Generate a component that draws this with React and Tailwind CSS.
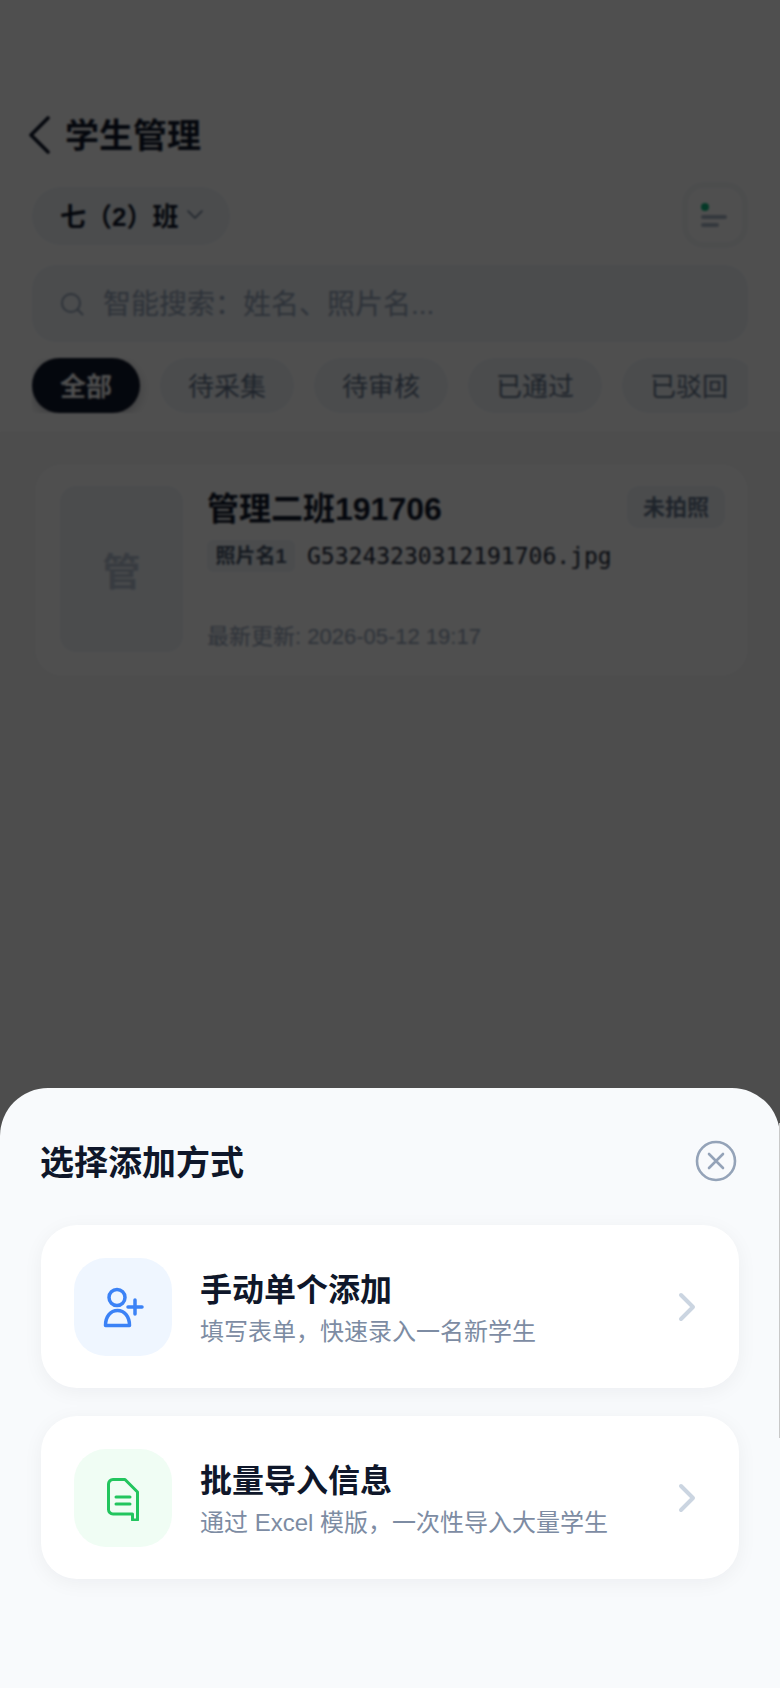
import React from "react";

const sans = "font-['Liberation_Sans','Noto_Sans_CJK_SC',sans-serif]";

function Tab({ label, active }) {
  return (
    <div
      className={
        active
          ? "shrink-0 h-[55px] px-7 pt-[3px] rounded-full flex items-center bg-[#0f172a] text-white text-[26px] font-bold shadow-[0_4px_12px_rgba(15,23,42,0.25)]"
          : "shrink-0 h-[55px] px-7 pt-[3px] rounded-full flex items-center bg-[#f1f5f9] text-[#64748b] text-[26px]"
      }
    >
      {label}
    </div>
  );
}

function Option({ tint, icon, title, sub }) {
  return (
    <div className="h-[163px] rounded-[36px] bg-white flex items-center pl-[33px] pr-[42px] shadow-[0_4px_20px_rgba(15,23,42,0.05)]">
      <div className={`w-[98px] h-[98px] rounded-[32px] flex items-center justify-center shrink-0 ${tint}`}>{icon}</div>
      <div className="ml-7 flex-1 min-w-0 pt-[5px]">
        <div className="text-[32px] leading-[40px] font-bold text-[#0f172a]">{title}</div>
        <div className="mt-[5px] text-[24px] leading-[34px] text-[#7d8ca3]">{sub}</div>
      </div>
      <svg width="20" height="32" viewBox="0 0 20 32" fill="none" stroke="#cbd5e1" strokeWidth="4" strokeLinecap="round" strokeLinejoin="round">
        <path d="M4 4l12 12L4 28" />
      </svg>
    </div>
  );
}

export default function App() {
  return (
    <div className={`relative w-[780px] h-[1688px] overflow-hidden bg-[#f7f7f7] ${sans}`}>
      <div className="bg-white h-[433px] pt-[117px] px-8 border-b border-[#f3f4f6]">
        <div className="flex items-center h-[38px] -ml-[5px]">
          <svg className="-mt-[2px]" width="24" height="38" viewBox="0 0 24 38" fill="none" stroke="#0f172a" strokeWidth="3.6" strokeLinecap="round" strokeLinejoin="round">
            <path d="M21 2L4 19l17 17" />
          </svg>
          <div className="ml-[14px] text-[34px] font-bold leading-[38px] text-[#0f172a]">学生管理</div>
        </div>
        <div className="flex items-center justify-between mt-[31px] h-[60px]">
          <div className="h-[58px] w-[198px] rounded-full bg-[#f1f5f9] flex items-center pl-7">
            <span className="text-[26px] font-bold text-[#0f172a] whitespace-nowrap pt-[2px]">七（2）班</span>
            <svg className="ml-[8px] -mt-[3px]" width="18" height="12" viewBox="0 0 18 12" fill="none" stroke="#64748b" strokeWidth="1.6" strokeLinecap="round" strokeLinejoin="round">
              <path d="M2 2l7 7 7-7" />
            </svg>
          </div>
          <div className="w-[66px] h-[66px] -mt-[2px] rounded-[22px] bg-white border-[6px] border-[#f5f7f9] flex flex-col justify-center pl-[13px] gap-[4px]">
            <div className="w-2 h-2 rounded-full bg-[#10b981]" />
            <div className="w-[26px] h-1 rounded-full bg-[#a8b4c6]" />
            <div className="w-[18px] h-1 rounded-full bg-[#a8b4c6]" />
          </div>
        </div>
        <div className="mt-[19px] h-[77px] rounded-[24px] bg-[#f1f5f9] flex items-center pl-[28px]">
          <svg width="24" height="24" viewBox="0 0 24 24" fill="none" stroke="#94a3b8" strokeWidth="2" strokeLinecap="round">
            <circle cx="11" cy="11" r="9" />
            <path d="M18 18l4.5 4.5" />
          </svg>
          <span className="ml-[19px] pt-[2px] text-[28px] text-[#94a3b8]">智能搜索：姓名、照片名...</span>
        </div>
        <div className="mt-[16px] flex gap-5 overflow-hidden">
          <Tab label="全部" active />
          <Tab label="待采集" />
          <Tab label="待审核" />
          <Tab label="已通过" />
          <Tab label="已驳回" />
        </div>
      </div>

      <div className="mx-[34px] mt-[30px] w-[715px] h-[214px] rounded-[28px] bg-white border border-[#f3f4f6] flex pl-[25px] pr-[23px] pt-[22px]">
        <div className="w-[123px] h-[166px] pt-[6px] rounded-[16px] bg-[#f1f5f9] flex items-center justify-center text-[38px] font-bold text-[#b4bfcf] shrink-0">管</div>
        <div className="ml-[24px] flex-1 min-w-0 flex flex-col">
          <div className="flex justify-between items-start">
            <div className="text-[32px] leading-[46px] font-bold text-[#0f172a] whitespace-nowrap">管理二班191706</div>
            <div className="w-[98px] h-[42px] rounded-[12px] bg-[#f1f5f9] flex items-center justify-center text-[22px] font-bold text-[#64748b]">未拍照</div>
          </div>
          <div className="flex items-center mt-[7px]">
            <div className="w-[88px] h-[32px] rounded-[6px] bg-[#f1f5f9] flex items-center justify-center text-[20px] text-[#475569] font-bold whitespace-nowrap">照片名1</div>
            <div className="ml-3 text-[23px] font-['DejaVu_Sans_Mono',monospace] text-[#1e293b]">G53243230312191706.jpg</div>
          </div>
          <div className="mt-[46px] text-[22px] text-[#94a3b8]">最新更新: 2026-05-12 19:17</div>
        </div>
      </div>

      <div className="absolute inset-0 bg-black/[0.69] backdrop-blur-[0.8px]" />

      <div className="absolute left-0 right-0 bottom-0 h-[600px] rounded-t-[48px] bg-[#f8fafc] pt-[49px] px-[41px]">
        <div className="flex items-center justify-between h-[50px]">
          <div className="text-[34px] font-bold text-[#0f172a] -ml-px pt-[3px]">选择添加方式</div>
          <svg className="mr-[2px] -mt-[2px]" width="42" height="42" viewBox="0 0 42 42" fill="none" stroke="#94a3b8" strokeWidth="2.6" strokeLinecap="round">
            <circle cx="21" cy="21" r="19" />
            <path d="M14 14l14 14M28 14L14 28" />
          </svg>
        </div>
        <div className="mt-[38px] flex flex-col gap-[28px]">
          <Option
            tint="bg-[#eff6ff]"
            title="手动单个添加"
            sub="填写表单，快速录入一名新学生"
            icon={
              <svg width="42" height="42" viewBox="0 0 42 42" fill="none" stroke="#3b82f6" strokeWidth="3.5" strokeLinecap="round" strokeLinejoin="round">
                <circle cx="15" cy="11.5" r="8" />
                <path d="M3.5 39.5c0-9 5-15 12-15s12 6 12 15z" />
                <path d="M26 21h14M33 14v14" />
              </svg>
            }
          />
          <Option
            tint="bg-[#f0fdf4]"
            title="批量导入信息"
            sub="通过 Excel 模版，一次性导入大量学生"
            icon={
              <svg width="32" height="46" viewBox="0 0 32 46" fill="none" stroke="#22c55e" strokeWidth="3" strokeLinecap="round" strokeLinejoin="round">
                <path d="M6 4.5h12L30.5 17v28h-5v-6H6a4.5 4.5 0 0 1-4.5-4.5V9A4.5 4.5 0 0 1 6 4.5z" />
                <path d="M9 22h14M9 29h14" />
              </svg>
            }
          />
        </div>
      </div>

      <div className="absolute right-0 top-[1123px] h-[315px] w-px bg-[#c9c9c9]" />
    </div>
  );
}
